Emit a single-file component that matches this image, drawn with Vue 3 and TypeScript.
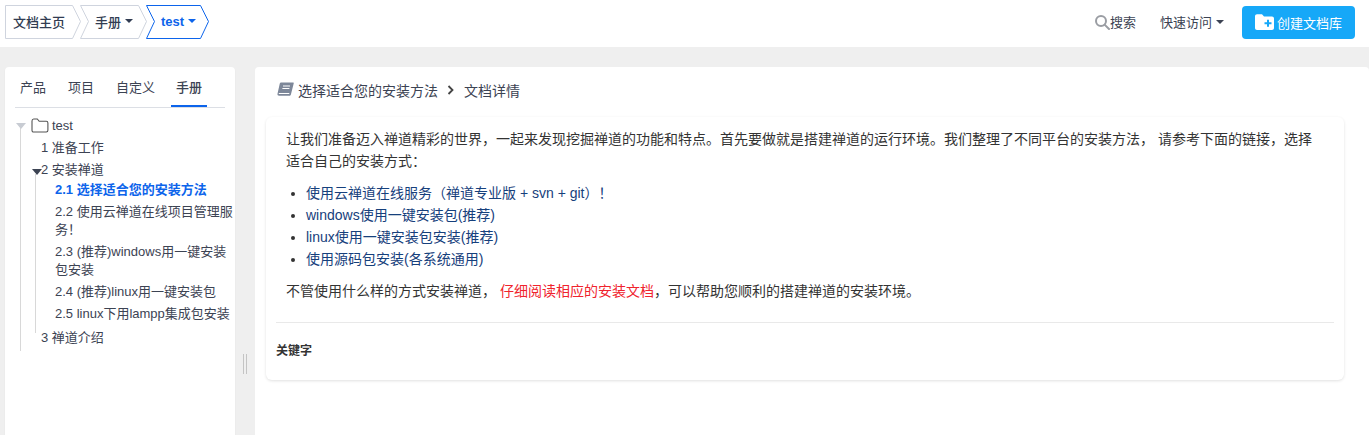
<script setup lang="ts">
interface Crumb {
  label: string;
  caret: boolean;
  active: boolean;
  width: number;
}
interface Leaf {
  label: string;
  active?: boolean;
}

const crumbs: Crumb[] = [
  { label: "文档主页", caret: false, active: false, width: 76 },
  { label: "手册", caret: true, active: false, width: 67 },
  { label: "test", caret: true, active: true, width: 63 },
];
const tabs = ["产品", "项目", "自定义", "手册"];
const leaves: Leaf[] = [
  { label: "2.1 选择适合您的安装方法", active: true },
  { label: "2.2 使用云禅道在线项目管理服务！" },
  { label: "2.3 (推荐)windows用一键安装包安装" },
  { label: "2.4 (推荐)linux用一键安装包" },
  { label: "2.5 linux下用lampp集成包安装" },
];
const links = [
  "使用云禅道在线服务（禅道专业版 + svn + git）！",
  "windows使用一键安装包(推荐)",
  "linux使用一键安装包安装(推荐)",
  "使用源码包安装(各系统通用)",
];

// the chevron outline of a breadcrumb, first one has a flat left edge
function crumbPath(c: Crumb, i: number) {
  const w = c.width - 0.5;
  const notch = i === 0 ? "" : " L8.5 16.5";
  return `M0.5 0.5 H${w - 8} L${w} 16.5 L${w - 8} 33.5 H0.5${notch} Z`;
}
</script>

<template>
  <div class="page">
    <header class="topbar">
      <nav class="crumbs">
        <a
          v-for="(c, i) in crumbs"
          :key="c.label"
          class="crumb"
          :class="{ active: c.active, first: i === 0 }"
          :style="{ width: c.width + 'px' }"
        >
          <svg class="crumb-bg" :width="c.width" height="34" :viewBox="`0 0 ${c.width} 34`">
            <path :d="crumbPath(c, i)" />
          </svg>
          <span class="crumb-text">{{ c.label }}</span>
          <i v-if="c.caret" class="caret" />
        </a>
      </nav>

      <div class="actions">
        <a class="search">
          <svg width="16" height="16" viewBox="0 0 16 16" fill="none" stroke="#9a9da3" stroke-width="2">
            <circle cx="7" cy="7" r="5" />
            <path d="M10.6 10.6 15 15" stroke-linecap="round" />
          </svg>
          <span>搜索</span>
        </a>
        <a class="quick">快速访问<i class="caret" /></a>
        <button class="create" type="button">
          <svg width="19" height="16" viewBox="0 0 19 16">
            <path fill="#fff" d="M0 2.2C0 1 .9.2 2 .2h5l2 2.3h8c1.100 0 2 .9 2 2V14c0 1.100-.9 2-2 2H2c-1.100 0-2-.9-2-2Z" />
            <path stroke="#16a8f8" stroke-width="2" d="M13 5.700v7M9.500 9.200h7" />
          </svg>
          <span>创建文档库</span>
        </button>
      </div>
    </header>

    <main class="body">
      <aside class="side">
        <ul class="tabs">
          <li v-for="t in tabs" :key="t" :class="{ on: t === '手册' }">{{ t }}</li>
        </ul>
        <div class="tree">
          <div class="root-row">
            <i class="tri grey" />
            <svg width="18" height="15" viewBox="0 0 18 15" fill="none" stroke="#555" stroke-width="1.100">
              <path d="M1 3c0-1.200.6-2 1.700-2h3.600l1.900 2.300h7.100c1 0 1.600.7 1.600 1.700v7.300c0 1-.6 1.700-1.600 1.700H2.700C1.600 14 1 13.300 1 12.300Z" />
            </svg>
            <span>test</span>
          </div>
          <div class="level1">
            <div class="row">1 准备工作</div>
            <div class="row open"><i class="tri" />2 安装禅道</div>
            <div class="level2">
              <a v-for="l in leaves" :key="l.label" class="leaf" :class="{ active: l.active }">{{ l.label }}</a>
            </div>
            <div class="row">3 禅道介绍</div>
          </div>
        </div>
      </aside>

      <div class="splitter"><i /><i /></div>

      <section class="content">
        <div class="path">
          <svg width="17" height="15" viewBox="0 0 17 15">
            <path fill="#7d8799" d="M4 .5h12c.6 0 .9.4.7 1l-2.800 11c-.2.8-.8 1.300-1.600 1.300H2.200C.9 13.800.200 13 .5 11.800L2.800 1.500C3 .9 3.400.5 4 .5Z" />
            <path stroke="#fff" d="M6 4h7M5.400 6.500h7M1.800 11.500h10.500" fill="none" />
          </svg>
          <span>选择适合您的安装方法</span>
          <svg class="chev" width="8" height="10" viewBox="0 0 8 10" fill="none" stroke="#444" stroke-width="1.800">
            <path d="M1.500 1 5.500 5l-4 4" />
          </svg>
          <span>文档详情</span>
        </div>

        <article class="card">
          <div class="doc">
            <p class="lead">让我们准备迈入禅道精彩的世界，一起来发现挖掘禅道的功能和特点。首先要做就是搭建禅道的运行环境。我们整理了不同平台的安装方法， 请参考下面的链接，选择适合自己的安装方式：</p>
            <ul class="links">
              <li v-for="l in links" :key="l"><a>{{ l }}</a></li>
            </ul>
            <p class="tail">不管使用什么样的方式安装禅道， <em>仔细阅读相应的安装文档</em>，可以帮助您顺利的搭建禅道的安装环境。</p>
          </div>
          <div class="keywords">关键字</div>
        </article>
      </section>
    </main>
  </div>
</template>

<style>
html,
body {
  margin: 0;
  height: 100%;
  overflow: hidden;
  background: #efefef;
}
</style>

<style scoped>
.page {
  height: 435px;
  display: flex;
  flex-direction: column;
  font-family: "Liberation Sans", "Noto Sans CJK SC", sans-serif;
  font-size: 13px;
  color: #3c4353;
  background: #efefef;
}
.topbar {
  height: 47px;
  flex: none;
  box-sizing: border-box;
  padding: 5px 14px 0 5px;
  display: flex;
  justify-content: space-between;
  align-items: flex-start;
  background: #fff;
}
.crumbs {
  display: flex;
}
.crumb {
  position: relative;
  height: 34px;
  margin-right: -1px;
  box-sizing: border-box;
  padding: 0 0 2px 15px;
  display: flex;
  align-items: center;
  color: #313c52;
}
.crumb.first {
  padding-left: 8px;
}
.crumb-bg {
  position: absolute;
  left: 0;
  top: 0;
}
.crumb-bg path {
  fill: #fff;
  stroke: #cfd4de;
}
.crumb.active .crumb-bg path {
  stroke: #0c64eb;
}
.crumb-text {
  position: relative;
  font-weight: 500;
}
.crumb.active {
  color: #0c64eb;
}
.crumb.active .crumb-text {
  font-weight: 700;
}
.caret {
  display: inline-block;
  margin-left: 4px;
  border-top: 4px solid currentColor;
  border-left: 4px solid transparent;
  border-right: 4px solid transparent;
  position: relative;
}
.actions {
  display: flex;
  align-items: center;
  height: 33px;
  margin-top: 1px;
}
.search {
  display: flex;
  align-items: center;
  gap: 0;
  margin-right: 24px;
  padding-bottom: 2px;
}
.quick {
  display: flex;
  align-items: center;
  margin-right: 18px;
  padding-bottom: 2px;
}
.create {
  width: 113px;
  height: 33px;
  border: 0;
  border-radius: 4px;
  background: #16a8f8;
  color: #fff;
  font: inherit;
  padding: 0 0 1px;
  display: flex;
  align-items: center;
  justify-content: center;
  gap: 3px;
}
.body {
  flex: 1;
  min-height: 0;
  display: flex;
  padding: 20px 0 0 5px;
}
.side {
  width: 230px;
  flex: none;
  box-sizing: border-box;
  padding: 0 10px 0 10px;
  background: #fff;
  border-radius: 4px 4px 0 0;
  box-shadow: 0 1px 2px rgba(0, 0, 0, 0.05);
}
.tabs {
  list-style: none;
  margin: 0;
  padding: 0;
  height: 40px;
  display: flex;
  gap: 0;
  border-bottom: 1px solid #dcdfe5;
}
.tabs li {
  padding: 0 5px;
  margin-right: 12px;
  line-height: 41px;
  height: 40px;
}
.tabs li:nth-child(3) {
  margin-right: 11px;
}
.tabs li.on {
  margin-right: 0;
  box-shadow: inset 0 -2px 0 #0c64eb;
  font-weight: 500;
}
.tree {
  position: relative;
  padding-top: 8px;
}
.root-row {
  height: 19px;
  display: flex;
  align-items: center;
  padding-left: 1px;
  position: relative;
}
.root-row svg {
  margin: 0 3px 0 5px;
}
.tri {
  display: inline-block;
  border-top: 6px solid #3c4353;
  border-left: 5px solid transparent;
  border-right: 5px solid transparent;
}
.tri.grey {
  border-top-color: #c8ccd3;
}
.level1 {
  margin: -8px 0 0 5px;
  border-left: 1px solid #d8d8d8;
  padding: 10px 0 0 20px;
  height: 224px;
  box-sizing: border-box;
}
.row {
  height: 22px;
  line-height: 22px;
  position: relative;
  white-space: nowrap;
}
.row.open .tri {
  position: absolute;
  left: -9px;
  top: 10px;
}
.level2 {
  margin: -8px 0 -6px -6px;
  border-left: 1px solid #d8d8d8;
  padding: 6px 0 0 19px;
  width: 178px;
  height: 160px;
  box-sizing: border-box;
  position: relative;
}
.leaf {
  display: block;
  line-height: 18px;
  padding: 2px 0;
  width: 178px;
}
.leaf.active {
  color: #0c64eb;
  font-weight: 700;
}
.splitter {
  width: 20px;
  flex: none;
  display: flex;
  gap: 2px;
  justify-content: center;
  align-items: center;
  padding-top: 225px;
  box-sizing: border-box;
  height: 368px;
}
.splitter i {
  width: 1px;
  height: 20px;
  background: #c4c4c4;
}
.content {
  flex: 1;
  min-width: 0;
  background: #fff;
  border-radius: 4px 4px 0 0;
  box-sizing: border-box;
  padding: 0 25px 0 11px;
  font-size: 14px;
}
.path {
  height: 45px;
  display: flex;
  align-items: center;
  padding-left: 11px;
  gap: 4px;
  margin-bottom: 5px;
}
.chev {
  margin: 0 5px;
}
.card {
  height: 263px;
  box-sizing: border-box;
  padding: 0 10px;
  border-radius: 6px;
  box-shadow: 0 1px 3px rgba(0, 0, 0, 0.12);
}
.doc {
  height: 206px;
  box-sizing: border-box;
  padding-top: 11px;
  border-bottom: 1px solid #e9e9e9;
  color: #333;
}
.lead,
.tail {
  margin: 0;
  line-height: 22px;
  padding: 0 10px;
}
.links {
  margin: 10px 0;
  padding: 0 0 0 30px;
  line-height: 22px;
}
.links a {
  color: #16407c;
}
.tail em {
  font-style: normal;
  color: #f0232d;
}
.keywords {
  padding-top: 20px;
  font-size: 12px;
  font-weight: 700;
  line-height: 16px;
  color: #333;
}
</style>
